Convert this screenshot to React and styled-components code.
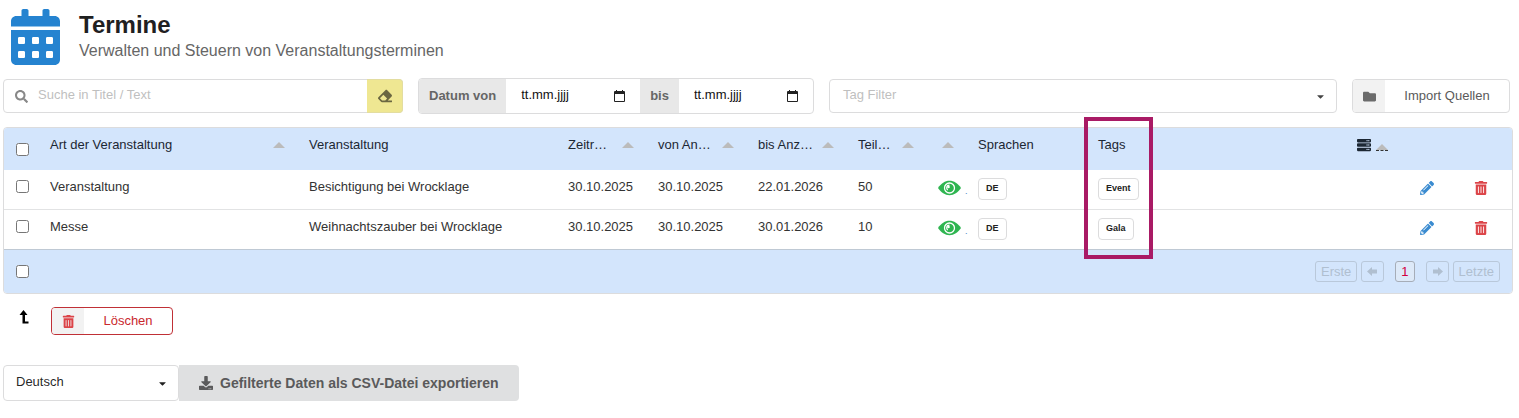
import React from 'react';
import styled, { createGlobalStyle, css } from 'styled-components';
import {
  FaSearch, FaEraser, FaFolder, FaServer, FaPencilAlt, FaTrashAlt, FaDownload, FaCaretDown,
} from 'react-icons/fa';

const GlobalStyle = createGlobalStyle`
  *, *::before, *::after { box-sizing: border-box; }
  body {
    margin: 0;
    background: #fff;
    color: rgba(0, 0, 0, 0.87);
    font: 13px/18px "Liberation Sans", Arial, sans-serif;
  }
  button, input, select { font: inherit; color: inherit; margin: 0; }
  svg { display: block; flex: none; }
`;

const line = '#dcdcdd';
const headBlue = '#d3e5fc';

const Page = styled.main`
  padding: 9px 6px 16px 3px;
`;

const Header = styled.header`
  display: flex;
  align-items: center;
  gap: 19px;
  padding-left: 8px;
  color: #2583d0;
`;

const Title = styled.h1`
  margin: 0;
  font-size: 24px;
  line-height: 28px;
  color: #1f2021;
`;

const Subtitle = styled.p`
  margin: 0;
  font-size: 16px;
  line-height: 24px;
  color: #666;
`;

const Toolbar = styled.div`
  display: flex;
  align-items: center;
  gap: 15px;
  margin-top: 13px;
  padding-right: 3px;
`;

const SearchField = styled.div`
  display: flex;
  align-items: center;
  width: 400px;
  height: 34px;
  border: 1px solid ${line};
  border-radius: 4px;
  padding-left: 11px;
  gap: 10px;
  color: #888;
`;

const SearchInput = styled.input`
  flex: 1;
  min-width: 0;
  border: 0;
  padding: 0 0 2px;
  outline: 0;
  background: none;
  &::placeholder { color: #bfbfbf; opacity: 1; }
`;

const ClearButton = styled.button`
  display: flex;
  align-items: center;
  justify-content: center;
  width: 36px;
  height: 34px;
  margin-right: -1px;
  border: 1px solid #e3dda0;
  border-left: 0;
  border-radius: 0 4px 4px 0;
  background: #efe792;
  color: #6b6741;
`;

const DateGroup = styled.div`
  display: flex;
  height: 36px;
  border: 1px solid ${line};
  border-radius: 4px;
  overflow: hidden;
`;

const DateLabel = styled.label`
  display: flex;
  align-items: center;
  padding: 0 10px;
  background: #e8e8e8;
  color: #666;
  font-weight: bold;
`;

const DateField = styled.div`
  display: flex;
  align-items: center;
  width: 134px;
  padding: 0 15px;
  color: #111;
`;

const DateInput = styled.input`
  flex: 1;
  min-width: 0;
  border: 0;
  padding: 0 0 2px;
  background: none;
  &::placeholder { color: #111; opacity: 1; }
`;

const TagFilter = styled.button`
  display: flex;
  align-items: center;
  justify-content: space-between;
  flex: 1;
  height: 34px;
  padding: 0 10px 0 13px;
  border: 1px solid ${line};
  border-radius: 4px;
  background: #fff;
  span { color: #bfbfbf; padding-bottom: 2px; }
  svg { color: #444; }
`;

const IconButton = styled.button`
  display: flex;
  align-items: stretch;
  width: ${(p) => p.$width}px;
  height: ${(p) => p.$height}px;
  padding: 0;
  border: 1px solid ${(p) => p.$border};
  border-radius: 4px;
  background: #fff;
  color: ${(p) => p.$color};
  overflow: hidden;
`;

const IconButtonIcon = styled.span`
  display: flex;
  align-items: center;
  justify-content: center;
  width: 32px;
  background: #f2f2f2;
  color: ${(p) => p.$color};
`;

const IconButtonText = styled.span`
  flex: 1;
  align-self: center;
  text-align: center;
`;

const Table = styled.table`
  width: 100%;
  margin-top: 13px;
  table-layout: fixed;
  border: 1px solid ${line};
  border-radius: 4px;
  border-spacing: 0;
`;

const cell = css`
  padding: 8px 10px 0;
  text-align: left;
  vertical-align: top;
  font-weight: normal;
  white-space: nowrap;
`;

const Th = styled.th`
  ${cell}
  position: relative;
  height: 42px;
  background: ${headBlue};
  color: #1c2733;
  &:first-child { border-top-left-radius: 3px; }
  &:last-child { border-top-right-radius: 3px; }
`;

const HeadContent = styled.div`
  display: flex;
  align-items: center;
  justify-content: space-between;
  min-height: 18px;
  padding-right: 4px;
`;

const SortArrow = styled.i`
  flex: none;
  margin-left: auto;
  border: 6px solid transparent;
  border-top: 0;
  border-bottom-color: #bbb;
`;

const Td = styled.td`
  ${cell}
  height: 40px;
  border-bottom: 1px solid #e2e3e4;
  color: #333;
  tr:last-child > & { border-bottom-color: #bfc9d4; }
`;

const FootCell = styled.td`
  height: 43px;
  padding: 0 12px 0 10px;
  background: ${headBlue};
  &:first-child { border-bottom-left-radius: 3px; }
  &:last-child { border-bottom-right-radius: 3px; }
`;

const Check = styled.input.attrs({ type: 'checkbox' })`
  display: block;
  width: 13px;
  height: 13px;
  margin: ${(p) => p.$top || 0}px 0 0 2px;
`;

const Centered = styled.div`
  display: flex;
  align-items: center;
  justify-content: center;
  width: 34px;
  height: 20px;
`;

const Status = styled.div`
  display: flex;
  align-items: flex-start;
  gap: 4px;
  padding-top: 2px;
  color: #4183c4;
`;

const StatusDot = styled.span`
  align-self: flex-end;
  font-size: 9px;
  line-height: 22px;
`;

const Badge = styled.span`
  display: inline-block;
  padding: 4px 7px 5px;
  border: 1px solid ${line};
  border-radius: 4px;
  background: #fff;
  color: #222;
  font-size: 9px;
  line-height: 11px;
  font-weight: bold;
`;

const Highlight = styled.div`
  position: absolute;
  top: -11px;
  left: -4px;
  width: 69px;
  height: 142px;
  border: 4px solid #a91a65;
  pointer-events: none;
`;

const ServerHead = styled.div`
  display: flex;
  align-items: center;
  gap: 5px;
  height: 18px;
`;

const SortMark = styled.span`
  padding-top: 4px;
  border-bottom: 1px dashed #333;
`;

const PlainButton = styled.button`
  padding: 0;
  border: 0;
  background: none;
  color: ${(p) => p.$color};
`;

const Pager = styled.nav`
  display: flex;
  justify-content: flex-end;
  gap: 4px;
`;

const PageButton = styled.button`
  display: flex;
  align-items: center;
  justify-content: center;
  height: 21px;
  padding: 0 5px;
  min-width: ${(p) => (p.$current ? 19 : 23)}px;
  margin: 0 ${(p) => (p.$current ? 7 : 0)}px;
  border: 1px solid ${(p) => (p.$current ? '#a6adb8' : '#b9c8da')};
  border-radius: 3px;
  background: ${(p) => (p.$current ? '#dde9f8' : 'transparent')};
  color: ${(p) => (p.$current ? '#d3003f' : '#b0bfd0')};
`;

const Actions = styled.div`
  display: flex;
  align-items: flex-start;
  gap: 18px;
  margin-top: 13px;
  padding-left: 16px;
`;

const ExportBar = styled.div`
  display: flex;
  margin-top: 30px;
`;

const SelectWrap = styled.div`
  display: flex;
  align-items: center;
  width: 176px;
  height: 36px;
  border: 1px solid ${line};
  border-radius: 4px;
  padding-right: 10px;
`;

const Select = styled.select`
  appearance: none;
  flex: 1;
  height: 34px;
  padding: 0 12px 2px;
  border: 0;
  background: none;
`;

const ExportButton = styled.button`
  display: flex;
  align-items: center;
  gap: 7px;
  height: 36px;
  padding: 0 20px;
  border: 0;
  border-radius: 0 4px 4px 0;
  background: #dfe0e1;
  color: #5a5a5b;
  font-size: 14px;
  font-weight: bold;
`;

const CalendarLogo = () => (
  <svg width="49" height="56" viewBox="0 0 448 512" fill="currentColor" aria-hidden="true">
    <path d="M0 464c0 26.500 21.500 48 48 48h352c26.500 0 48-21.500 48-48V192H0v272zm320-196c0-6.600 5.400-12 12-12h40c6.600 0 12 5.400 12 12v40c0 6.600-5.400 12-12 12h-40c-6.600 0-12-5.400-12-12v-40zm0 128c0-6.600 5.400-12 12-12h40c6.600 0 12 5.400 12 12v40c0 6.600-5.400 12-12 12h-40c-6.600 0-12-5.400-12-12v-40zM192 268c0-6.600 5.400-12 12-12h40c6.600 0 12 5.400 12 12v40c0 6.600-5.400 12-12 12h-40c-6.600 0-12-5.400-12-12v-40zm0 128c0-6.600 5.400-12 12-12h40c6.600 0 12 5.400 12 12v40c0 6.600-5.400 12-12 12h-40c-6.600 0-12-5.400-12-12v-40zM64 268c0-6.600 5.400-12 12-12h40c6.600 0 12 5.400 12 12v40c0 6.600-5.400 12-12 12H76c-6.600 0-12-5.400-12-12v-40zm0 128c0-6.600 5.400-12 12-12h40c6.600 0 12 5.400 12 12v40c0 6.600-5.400 12-12 12H76c-6.600 0-12-5.400-12-12v-40zM400 64h-48V16c0-8.800-7.200-16-16-16h-32c-8.800 0-16 7.200-16 16v48H160V16c0-8.800-7.200-16-16-16h-32c-8.800 0-16 7.200-16 16v48H48C21.500 64 0 85.500 0 112v48h448v-48c0-26.500-21.500-48-48-48z" />
  </svg>
);

const CalendarGlyph = () => (
  <svg width="11" height="12" viewBox="0 0 11 12" aria-hidden="true">
    <path d="M0 2a1 1 0 0 1 1-1h1V0h1v1h5V0h1v1h1a1 1 0 0 1 1 1v9a1 1 0 0 1-1 1H1a1 1 0 0 1-1-1zM1 4v7h9V4z" fill="#222" fillRule="evenodd" />
  </svg>
);

const EyeGlyph = () => (
  <svg width="23" height="16" viewBox="0 0 23 16" role="img" aria-label="Sichtbar">
    <path d="M0 8C3 3.500 7 .8 11.500 .8S20 3.500 23 8c-3 4.500-7 7.200-11.500 7.200S3 12.500 0 8z" fill="#2eb550" />
    <circle cx="11.500" cy="8" r="5" fill="none" stroke="#fff" strokeWidth="1.300" />
    <path d="M11.500 5.200a2.800 2.800 0 0 0-2.800 2.800a2.800 2.800 0 0 0 1 2" fill="none" stroke="#fff" strokeWidth="1.200" />
    <circle cx="10.500" cy="7" r="1.300" fill="#fff" />
  </svg>
);

const LevelUpGlyph = () => (
  <svg width="14" height="20" viewBox="0 0 14 20" aria-hidden="true">
    <path d="M4.500 3L8.500 8H6v6.500h3.500v2H3.500V8H.5z" fill="#000" />
  </svg>
);

const PageArrow = ({ forward }) => (
  <svg width="11" height="9" viewBox="0 0 11 9" aria-hidden="true">
    <path d={forward ? 'M11 4.500L6 0v2.500H1v4h5V9z' : 'M0 4.500L5 0v2.500h5v4H5V9z'} fill="currentColor" />
  </svg>
);

const rows = [
  ['Veranstaltung', 'Besichtigung bei Wrocklage', '30.10.2025', '30.10.2025', '22.01.2026', '50', 'Event'],
  ['Messe', 'Weihnachtszauber bei Wrocklage', '30.10.2025', '30.10.2025', '30.01.2026', '10', 'Gala'],
];

const columns = [36, null, null, 90, 100, 100, 80, 40, 120, null, 53, 54, 58];

const Sortable = ({ children }) => (
  <HeadContent><span>{children}</span><SortArrow /></HeadContent>
);

export default function App() {
  return (
    <Page>
      <GlobalStyle />
      <Header>
        <CalendarLogo />
        <div>
          <Title>Termine</Title>
          <Subtitle>Verwalten und Steuern von Veranstaltungsterminen</Subtitle>
        </div>
      </Header>

      <Toolbar>
        <SearchField>
          <FaSearch size={13} />
          <SearchInput aria-label="Suche" placeholder="Suche in Titel / Text" />
          <ClearButton aria-label="Filter leeren"><FaEraser size={14} /></ClearButton>
        </SearchField>
        <DateGroup>
          <DateLabel htmlFor="from">Datum von</DateLabel>
          <DateField><DateInput id="from" placeholder="tt.mm.jjjj" /><CalendarGlyph /></DateField>
          <DateLabel htmlFor="to">bis</DateLabel>
          <DateField><DateInput id="to" placeholder="tt.mm.jjjj" /><CalendarGlyph /></DateField>
        </DateGroup>
        <TagFilter><span>Tag Filter</span><FaCaretDown size={11} /></TagFilter>
        <IconButton $width={158} $height={34} $border={line} $color="#5a5a5a">
          <IconButtonIcon $color="#6b6b6b"><FaFolder size={13} /></IconButtonIcon>
          <IconButtonText>Import Quellen</IconButtonText>
        </IconButton>
      </Toolbar>

      <Table>
        <colgroup>
          {columns.map((w, i) => <col key={i} width={w || undefined} />)}
        </colgroup>
        <thead>
          <tr>
            <Th><Check $top={7} aria-label="Alle auswählen" /></Th>
            <Th><Sortable>Art der Veranstaltung</Sortable></Th>
            <Th>Veranstaltung</Th>
            <Th><Sortable>Zeitr…</Sortable></Th>
            <Th><Sortable>von An…</Sortable></Th>
            <Th><Sortable>bis Anz…</Sortable></Th>
            <Th><Sortable>Teil…</Sortable></Th>
            <Th><Sortable /></Th>
            <Th>Sprachen</Th>
            <Th>Tags<Highlight /></Th>
            <Th><ServerHead><FaServer size={14} /><SortMark><SortArrow as="div" /></SortMark></ServerHead></Th>
            <Th />
            <Th />
          </tr>
        </thead>
        <tbody>
          {rows.map(([kind, name, span, from, to, count, tag]) => (
            <tr key={kind}>
              <Td><Check $top={2} aria-label={kind} /></Td>
              <Td>{kind}</Td>
              <Td>{name}</Td>
              <Td>{span}</Td>
              <Td>{from}</Td>
              <Td>{to}</Td>
              <Td>{count}</Td>
              <Td><Status><EyeGlyph /><StatusDot>.</StatusDot></Status></Td>
              <Td><Badge>DE</Badge></Td>
              <Td><Badge>{tag}</Badge></Td>
              <Td />
              <Td><Centered><PlainButton $color="#3a8bd0" aria-label="Bearbeiten"><FaPencilAlt size={14} /></PlainButton></Centered></Td>
              <Td><Centered><PlainButton $color="#dc4448" aria-label="Löschen"><FaTrashAlt size={14} /></PlainButton></Centered></Td>
            </tr>
          ))}
        </tbody>
        <tfoot>
          <tr>
            <FootCell><Check aria-label="Alle auswählen" /></FootCell>
            <FootCell colSpan={12}>
              <Pager>
                <PageButton>Erste</PageButton>
                <PageButton aria-label="Zurück"><PageArrow /></PageButton>
                <PageButton $current>1</PageButton>
                <PageButton aria-label="Weiter"><PageArrow forward /></PageButton>
                <PageButton>Letzte</PageButton>
              </Pager>
            </FootCell>
          </tr>
        </tfoot>
      </Table>

      <Actions>
        <LevelUpGlyph />
        <IconButton $width={122} $height={28} $border="#c03036" $color="#c9282d">
          <IconButtonIcon $color="#dc4448"><FaTrashAlt size={13} /></IconButtonIcon>
          <IconButtonText>Löschen</IconButtonText>
        </IconButton>
      </Actions>

      <ExportBar>
        <SelectWrap>
          <Select aria-label="Sprache"><option>Deutsch</option></Select>
          <FaCaretDown size={11} />
        </SelectWrap>
        <ExportButton><FaDownload size={14} />Gefilterte Daten als CSV-Datei exportieren</ExportButton>
      </ExportBar>
    </Page>
  );
}
